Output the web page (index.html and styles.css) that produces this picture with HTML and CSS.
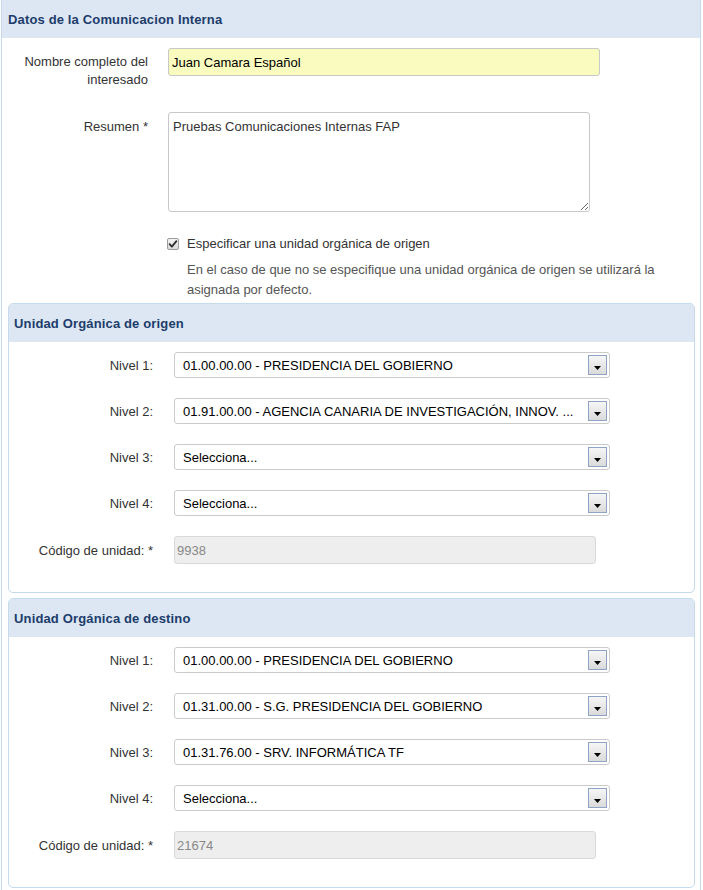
FILE: index.html
```html
<!DOCTYPE html>
<html lang="es">
<head>
<meta charset="utf-8">
<title>Datos de la Comunicacion Interna</title>
<link rel="stylesheet" href="styles.css">
</head>
<body>
<div class="outer">
  <div class="panel-head outer-head"><h2>Datos de la Comunicacion Interna</h2></div>
  <div class="outer-body">
    <div class="row r-name">
      <label class="lbl">Nombre completo del interesado</label>
      <input class="inp-yellow" type="text" value="Juan Camara Español">
    </div>
    <div class="row r-resumen">
      <label class="lbl">Resumen *</label>
      <textarea class="ta">Pruebas Comunicaciones Internas FAP</textarea>
    </div>
    <div class="check-row">
      <span class="cb"><svg width="12" height="12" viewBox="0 0 12 12"><defs><linearGradient id="g" x1="0" y1="0" x2="0" y2="1"><stop offset="0" stop-color="#f4f4f4"/><stop offset="1" stop-color="#d8d8d8"/></linearGradient></defs><rect x="0.5" y="0.5" width="11" height="11" rx="1.5" fill="url(#g)" stroke="#9c9c9c"/><path d="M2.6 6.2 L4.9 8.6 L9.4 3.2" fill="none" stroke="#2e2e2e" stroke-width="1.8" stroke-linecap="round" stroke-linejoin="round"/></svg></span>
      <span class="cb-text">Especificar una unidad orgánica de origen</span>
    </div>
    <p class="help">En el caso de que no se especifique una unidad orgánica de origen se utilizará la asignada por defecto.</p>

    <div class="inner">
      <div class="panel-head inner-head"><h2>Unidad Orgánica de origen</h2></div>
      <div class="inner-body">
        <div class="nrow"><span class="nlbl">Nivel 1:</span><div class="sel"><span>01.00.00.00 - PRESIDENCIA DEL GOBIERNO</span><span class="arrow"><svg width="7" height="4" viewBox="0 0 7 4"><path d="M0 0 H7 L3.5 4 Z" fill="#000"/></svg></span></div></div>
        <div class="nrow"><span class="nlbl">Nivel 2:</span><div class="sel"><span>01.91.00.00 - AGENCIA CANARIA DE INVESTIGACIÓN, INNOV. ...</span><span class="arrow"><svg width="7" height="4" viewBox="0 0 7 4"><path d="M0 0 H7 L3.5 4 Z" fill="#000"/></svg></span></div></div>
        <div class="nrow"><span class="nlbl">Nivel 3:</span><div class="sel"><span>Selecciona...</span><span class="arrow"><svg width="7" height="4" viewBox="0 0 7 4"><path d="M0 0 H7 L3.5 4 Z" fill="#000"/></svg></span></div></div>
        <div class="nrow"><span class="nlbl">Nivel 4:</span><div class="sel"><span>Selecciona...</span><span class="arrow"><svg width="7" height="4" viewBox="0 0 7 4"><path d="M0 0 H7 L3.5 4 Z" fill="#000"/></svg></span></div></div>
        <div class="nrow last"><span class="nlbl">Código de unidad: *</span><input class="code-inp" type="text" value="9938" readonly></div>
      </div>
    </div>

    <div class="inner">
      <div class="panel-head inner-head"><h2>Unidad Orgánica de destino</h2></div>
      <div class="inner-body">
        <div class="nrow"><span class="nlbl">Nivel 1:</span><div class="sel"><span>01.00.00.00 - PRESIDENCIA DEL GOBIERNO</span><span class="arrow"><svg width="7" height="4" viewBox="0 0 7 4"><path d="M0 0 H7 L3.5 4 Z" fill="#000"/></svg></span></div></div>
        <div class="nrow"><span class="nlbl">Nivel 2:</span><div class="sel"><span>01.31.00.00 - S.G. PRESIDENCIA DEL GOBIERNO</span><span class="arrow"><svg width="7" height="4" viewBox="0 0 7 4"><path d="M0 0 H7 L3.5 4 Z" fill="#000"/></svg></span></div></div>
        <div class="nrow"><span class="nlbl">Nivel 3:</span><div class="sel"><span>01.31.76.00 - SRV. INFORMÁTICA TF</span><span class="arrow"><svg width="7" height="4" viewBox="0 0 7 4"><path d="M0 0 H7 L3.5 4 Z" fill="#000"/></svg></span></div></div>
        <div class="nrow"><span class="nlbl">Nivel 4:</span><div class="sel"><span>Selecciona...</span><span class="arrow"><svg width="7" height="4" viewBox="0 0 7 4"><path d="M0 0 H7 L3.5 4 Z" fill="#000"/></svg></span></div></div>
        <div class="nrow last"><span class="nlbl">Código de unidad: *</span><input class="code-inp" type="text" value="21674" readonly></div>
      </div>
    </div>
  </div>
</div>
</body>
</html>
```

FILE: styles.css
```css
* { box-sizing: border-box; }

body {
  margin: 0;
  font-family: "Liberation Sans", Arial, sans-serif;
  font-size: 13px;
  color: #333;
  background: #fff;
}

.outer {
  margin-left: 1px;
  width: 700px;
  border: 1px solid #c5dbec;
  border-top: 0;
}

.panel-head {
  background: #dce7f3;
  display: flex;
  align-items: center;
}

.panel-head h2 {
  margin: 0;
  font-size: 13px;
  font-weight: bold;
  color: #1c3c6b;
  letter-spacing: 0.15px;
}

.outer-head {
  height: 38px;
  padding-left: 6px;
}

.outer-body {
  padding-top: 10px;
}

.row {
  display: flex;
  align-items: flex-start;
}

.lbl {
  width: 146px;
  margin-right: 20px;
  text-align: right;
  line-height: 18px;
  padding-top: 5px;
  color: #333;
}

.r-name { margin-bottom: 23px; }
.r-resumen { margin-bottom: 23px; }
.r-resumen .lbl { padding-top: 6px; }

.inp-yellow {
  width: 432px;
  height: 28px;
  border: 1px solid #c8c8c8;
  border-radius: 3px;
  background: #f9fbbf;
  padding: 0 3px;
  font: inherit;
  color: #000;
  outline: none;
}

.ta {
  width: 422px;
  height: 100px;
  border: 1px solid #c8c8c8;
  border-radius: 3px;
  padding: 5px 4px;
  font: inherit;
  line-height: 18px;
  color: #333;
  outline: none;
  display: block;
}

.check-row {
  display: flex;
  align-items: center;
  height: 18px;
  margin-left: 165px;
}

.cb {
  display: flex;
  width: 12px;
  height: 12px;
  margin-right: 8px;
}

.cb-text { line-height: 18px; }

.help {
  margin: 7px 0 0 185px;
  width: 480px;
  line-height: 20px;
  color: #555;
}

.inner {
  margin: 3px 5px 5px 6px;
  border: 1px solid #c5dbec;
  border-radius: 5px;
  overflow: hidden;
}

.inner-head {
  height: 38px;
  padding-left: 5px;
}

.inner-body {
  padding: 10px 0 28px;
}

.nrow {
  display: flex;
  align-items: center;
  margin-bottom: 20px;
}

.nrow.last { margin-bottom: 0; }

.nlbl {
  width: 144px;
  margin-right: 21px;
  text-align: right;
  color: #333;
}

.sel {
  width: 436px;
  height: 26px;
  border: 1px solid #cacaca;
  border-radius: 3px;
  display: flex;
  align-items: center;
  justify-content: space-between;
  padding: 0 2px 0 8px;
  color: #000;
  background: #fff;
}

.arrow {
  width: 19px;
  height: 20px;
  border: 1px solid #8ea3c5;
  background: linear-gradient(#f6f6f6, #dadada);
  display: flex;
  align-items: flex-end;
  justify-content: center;
  padding-bottom: 4px;
}

.arrow svg { display: block; }

.code-inp {
  width: 422px;
  height: 28px;
  border: 1px solid #d9d9d9;
  border-radius: 3px;
  background: #eee;
  padding: 0 2px;
  font: inherit;
  color: #888;
  outline: none;
}
```
